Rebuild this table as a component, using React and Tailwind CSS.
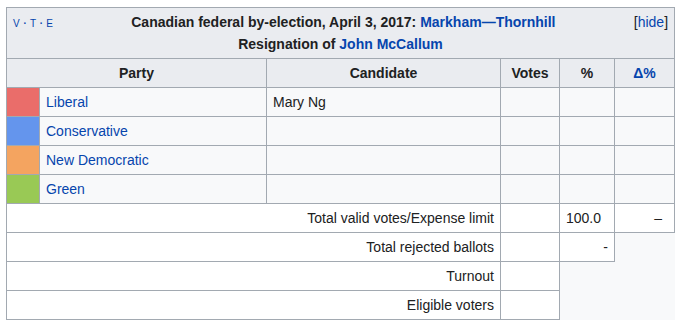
const cell = "border border-[#a2a9b1] px-[6px] py-[3px]";
const link = "text-[#0645ad]";

const parties = [
    { name: 'Liberal', color: 'bg-[#ea6d6a]', candidate: 'Mary Ng' },
    { name: 'Conservative', color: 'bg-[#6495ed]', candidate: '' },
    { name: 'New Democratic', color: 'bg-[#f4a460]', candidate: '' },
    { name: 'Green', color: 'bg-[#99c955]', candidate: '' },
];

export default function App() {
    return (
        <div className="min-h-[328px] bg-white pl-[6px] pt-[7px] font-['Liberation_Sans',Arial,sans-serif] text-[14px] leading-[22px] text-[#202122]">
            <table className="w-[668px] table-fixed border-collapse bg-[#f8f9fa]">
                <colgroup>
                    <col className="w-[33px]" />
                    <col className="w-[227px]" />
                    <col className="w-[234px]" />
                    <col className="w-[59px]" />
                    <col className="w-[55px]" />
                    <col className="w-[60px]" />
                </colgroup>
                <thead>
                    <tr>
                        <th colSpan={6} className={`${cell} bg-[#eaecf0] text-center font-bold`}>
                            <span className={`float-left text-[14px] font-normal ${link} [font-variant:small-caps]`}>{'v\u2009·\u2009t\u2009·\u2009e'}</span>
                            <span className="float-right font-normal">[<span className={link}>hide</span>]</span>
                            Canadian federal by-election, April 3, 2017: <span className={link}>Markham—Thornhill</span>
                            <br />
                            Resignation of <span className={link}>John McCallum</span>
                        </th>
                    </tr>
                    <tr className="bg-[#eaecf0] font-bold">
                        <th colSpan={2} className={`${cell} text-center`}>Party</th>
                        <th className={`${cell} text-center`}>Candidate</th>
                        <th className={`${cell} text-center`}>Votes</th>
                        <th className={`${cell} text-center`}>%</th>
                        <th className={`${cell} text-center ${link}`}>Δ%</th>
                    </tr>
                </thead>
                <tbody>
                    {parties.map(p => (
                        <tr key={p.name}>
                            <td className={`${cell} ${p.color}`}></td>
                            <td className={`${cell} ${link}`}>{p.name}</td>
                            <td className={cell}>{p.candidate}</td>
                            <td className={cell}></td>
                            <td className={cell}></td>
                            <td className={cell}></td>
                        </tr>
                    ))}
                    <tr>
                        <td colSpan={3} className={`${cell} bg-white text-right`}>Total valid votes/Expense limit</td>
                        <td className={`${cell} bg-white`}></td>
                        <td className={`${cell} bg-white`}>100.0</td>
                        <td className={`${cell} bg-white pr-[12px] text-right`}>–</td>
                    </tr>
                    <tr>
                        <td colSpan={3} className={`${cell} bg-white text-right`}>Total rejected ballots</td>
                        <td className={`${cell} bg-white`}></td>
                        <td className={`${cell} bg-white text-right`}>-</td>
                    </tr>
                    <tr>
                        <td colSpan={3} className={`${cell} bg-white text-right`}>Turnout</td>
                        <td className={`${cell} bg-white`}></td>
                    </tr>
                    <tr>
                        <td colSpan={3} className={`${cell} bg-white text-right`}>Eligible voters</td>
                        <td className={`${cell} bg-white`}></td>
                    </tr>
                </tbody>
            </table>
        </div>
    );
}
